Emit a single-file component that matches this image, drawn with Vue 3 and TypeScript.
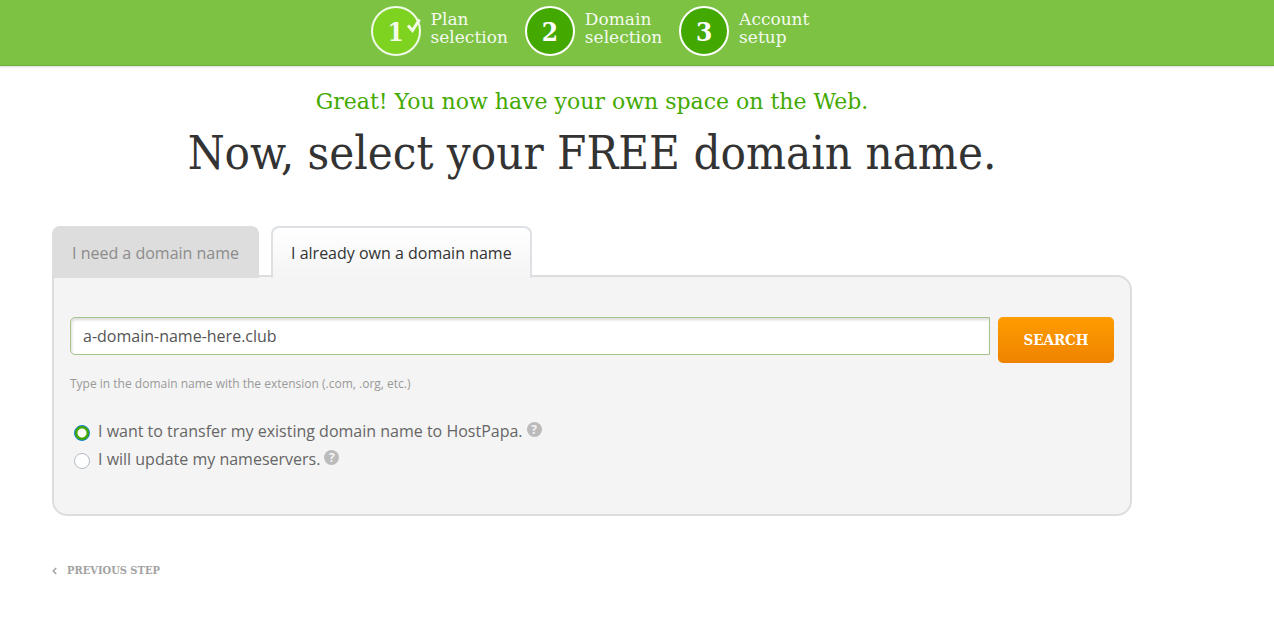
<script setup lang="ts">
import { ref } from 'vue'

interface Step {
  number: number
  lines: string[]
  done: boolean
}

interface Choice {
  id: string
  label: string
}

const steps: Step[] = [
  { number: 1, lines: ['Plan', 'selection'], done: true },
  { number: 2, lines: ['Domain', 'selection'], done: false },
  { number: 3, lines: ['Account', 'setup'], done: false },
]

const tabs: Choice[] = [
  { id: 'need', label: 'I need a domain name' },
  { id: 'own', label: 'I already own a domain name' },
]

const methods: Choice[] = [
  { id: 'transfer', label: 'I want to transfer my existing domain name to HostPapa.' },
  { id: 'nameservers', label: 'I will update my nameservers.' },
]

const activeTab = ref('own')
const domain = ref('a-domain-name-here.club')
const method = ref('transfer')
</script>

<template>
  <div class="page">
    <header class="top">
      <ol class="steps">
        <li v-for="step in steps" :key="step.number" class="step">
          <span class="circle" :class="{ done: step.done }">
            {{ step.number }}
            <svg v-if="step.done" class="check" width="16" height="16" viewBox="0 0 16 16" aria-hidden="true">
              <path d="M2 7.5 L6.5 12.5 L13.5 1.5" fill="none" stroke="#f2fbe9" stroke-width="3" />
            </svg>
          </span>
          <span class="step-label">
            <span v-for="line in step.lines" :key="line">{{ line }}</span>
          </span>
        </li>
      </ol>
    </header>

    <main class="content">
      <p class="lead">Great! You now have your own space on the Web.</p>
      <h1>Now, select your FREE domain name.</h1>

      <div class="tabs" role="tablist">
        <button
          v-for="tab in tabs"
          :key="tab.id"
          type="button"
          role="tab"
          class="tab"
          :class="{ active: activeTab === tab.id }"
          :aria-selected="activeTab === tab.id"
          @click="activeTab = tab.id"
        >
          {{ tab.label }}
        </button>
      </div>

      <form class="panel" @submit.prevent>
        <div class="search">
          <input v-model="domain" class="field" type="text" aria-label="Domain name" aria-describedby="domain-hint" />
          <button class="submit" type="submit">SEARCH</button>
        </div>
        <p id="domain-hint" class="hint">Type in the domain name with the extension (.com, .org, etc.)</p>

        <div class="methods">
          <div v-for="item in methods" :key="item.id" class="method">
            <input :id="item.id" v-model="method" class="radio" type="radio" name="method" :value="item.id" />
            <label :for="item.id">{{ item.label }}</label>
            <button class="help" type="button" aria-label="Help">?</button>
          </div>
        </div>
      </form>

      <a class="previous" href="#">
        <svg width="5" height="8" viewBox="0 0 5 8" aria-hidden="true">
          <path d="M4.2 1 L1.2 4 L4.2 7" fill="none" stroke="#a3a3a3" stroke-width="1.5" />
        </svg>
        <span>PREVIOUS STEP</span>
      </a>
    </main>
  </div>
</template>

<style>
body {
  margin: 0;
  background: #fff;
}
</style>

<style scoped>
.page {
  font-family: "Open Sans", "Noto Sans", sans-serif;
  font-size: 16px;
  color: #666;
}

.circle,
h1,
.submit,
.previous {
  font-family: "Roboto Slab", "DejaVu Serif Condensed", "DejaVu Serif", serif;
}

.step-label,
.lead {
  font-family: "Roboto Slab", "DejaVu Serif", serif;
}

.top {
  box-sizing: border-box;
  padding: 6px 94px 9px 0;
  background: #7dc243;
  border-bottom: 1px solid #6fae3b;
  box-shadow: 0 1px 2px rgba(0, 0, 0, 0.15);
}

.steps {
  display: flex;
  justify-content: center;
  gap: 17px;
  margin: 0;
  padding: 0;
  list-style: none;
}

.step {
  display: flex;
  gap: 10px;
}

.circle {
  position: relative;
  box-sizing: border-box;
  width: 50px;
  height: 50px;
  border: 2px solid #fff;
  border-radius: 50%;
  background: #43a900;
  color: #fff;
  font-size: 26px;
  font-weight: 700;
  line-height: 48px;
  text-align: center;
}

.circle.done {
  background: #7ed321;
  border-color: #f2fbe9;
  color: #f2fbe9;
}

.check {
  position: absolute;
  top: 10px;
  right: -3px;
}

.step-label {
  display: flex;
  flex-direction: column;
  padding-top: 4px;
  color: #f4faef;
  font-size: 17px;
  line-height: 18px;
}

.content {
  padding: 20px 142px 24px 52px;
}

.lead {
  margin: 0;
  color: #43a900;
  font-size: 22px;
  line-height: 32px;
  text-align: center;
}

h1 {
  margin: 2px 0 40px;
  color: #333;
  font-size: 47px;
  font-weight: 400;
  line-height: 66px;
  text-align: center;
}

.tabs {
  position: relative;
  display: flex;
  gap: 12px;
  margin-bottom: -3px;
}

.tab {
  box-sizing: border-box;
  height: 52px;
  padding: 0 18px;
  border: 2px solid #ddd;
  border-bottom: 0;
  border-radius: 8px 8px 0 0;
  background: #ddd;
  color: #8c8c8c;
  font: inherit;
  line-height: 50px;
  cursor: pointer;
}

.tab.active {
  border-color: #dde1e6;
  background: linear-gradient(#fff, #f4f4f4);
  color: #333;
}

.panel {
  padding: 40px 16px 41px;
  border: 2px solid #ddd;
  border-radius: 0 15px 15px 15px;
  background: #f4f4f4;
}

.search {
  display: flex;
  align-items: flex-start;
  gap: 8px;
}

.field {
  box-sizing: border-box;
  flex: 1;
  min-width: 0;
  height: 38px;
  padding: 0 12px;
  border: 1px solid #a4c48c;
  border-radius: 5px 0 0 5px;
  outline: 0;
  background: #fff;
  box-shadow: inset 1px 2px 3px rgba(0, 0, 0, 0.14);
  color: #555;
  font: inherit;
}

.submit {
  width: 116px;
  height: 46px;
  padding: 0;
  border: 0;
  border-radius: 5px;
  background: linear-gradient(#ff9c00, #ef8300);
  color: #fff;
  font-size: 15px;
  font-weight: 700;
  cursor: pointer;
}

.hint {
  margin: 12px 0 24px;
  color: #999;
  font-size: 12px;
  line-height: 18px;
}

.method {
  display: flex;
  align-items: center;
  height: 28px;
}

.radio {
  appearance: none;
  box-sizing: border-box;
  width: 16px;
  height: 16px;
  margin: 4px 8px 0 4px;
  border: 1px solid #b4bcc4;
  border-radius: 50%;
  background: #fff;
}

.radio:checked {
  border-color: #0a7fd0;
  background: radial-gradient(circle, #fff 4px, #43a900 5px);
}

.help {
  width: 15px;
  height: 15px;
  margin: 0 0 4px 4px;
  padding: 0;
  border: 0;
  border-radius: 50%;
  background: #bbb;
  color: #f4f4f4;
  font-family: "Open Sans", sans-serif;
  font-size: 12px;
  font-weight: 700;
  line-height: 15px;
  cursor: pointer;
}

.previous {
  display: inline-flex;
  align-items: center;
  gap: 10px;
  margin-top: 45px;
  color: #a3a3a3;
  font-size: 11px;
  font-weight: 700;
  line-height: 20px;
  text-decoration: none;
}
</style>
